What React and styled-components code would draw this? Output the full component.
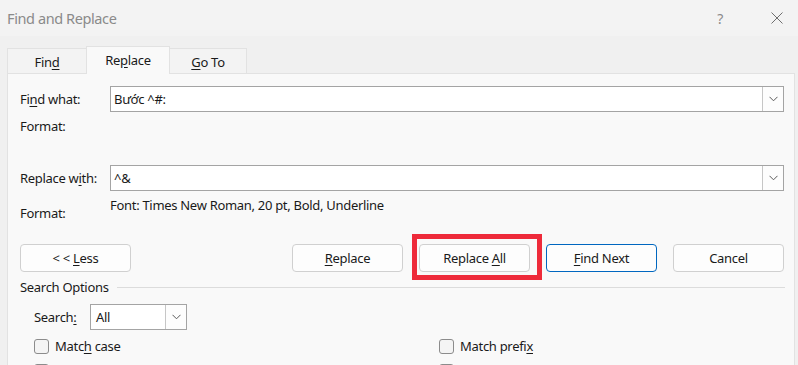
import React from 'react';
import styled, { createGlobalStyle, css } from 'styled-components';

const GlobalStyle = createGlobalStyle`
  html, body {
    margin: 0;
    padding: 0;
  }
  body {
    width: 798px;
    height: 365px;
    overflow: hidden;
    background: #f0f0f0;
    font-family: "Noto Sans", "Segoe UI", sans-serif;
    font-size: 13px;
    letter-spacing: -0.3px;
    color: #1a1a1a;
  }
  u {
    text-underline-offset: 2px;
  }
`;

const Window = styled.div`
  width: 798px;
  height: 365px;
  display: flex;
  flex-direction: column;
  overflow: hidden;
  background: #f0f0f0;
`;

const TitleBar = styled.div`
  height: 36px;
  flex: none;
  display: flex;
  align-items: center;
  padding: 0 15px 0 7px;
  background: #f3f3f3;
`;

const Title = styled.div`
  flex: 1;
  font-size: 14.5px;
  letter-spacing: -0.4px;
  color: #8a8a8a;
`;

const Controls = styled.div`
  display: flex;
  align-items: center;
  gap: 48px;
  color: #8a8a8a;
  font-size: 14px;
`;

const TabStrip = styled.div`
  height: 37px;
  flex: none;
  display: flex;
  align-items: flex-end;
  padding-left: 7px;
  position: relative;
  z-index: 1;
`;

const Tab = styled.div`
  height: 25px;
  box-sizing: border-box;
  width: ${(p) => p.$w}px;
  display: flex;
  align-items: center;
  justify-content: center;
  padding-top: 1px;
  background: #f3f3f3;
  border: 1px solid #e2e2e2;
  border-bottom: none;
  margin-left: -1px;
  &:first-child {
    margin-left: 0;
  }
  ${(p) =>
    p.$active &&
    css`
      height: 28px;
      margin-bottom: -1px;
      background: #f9f9f9;
      padding-top: 0;
      padding-bottom: 2px;
    `}
`;

const Panel = styled.div`
  flex: 1;
  margin: 0 3px 0 7px;
  background: #f9f9f9;
  border: 1px solid #e2e2e2;
  padding: 12px 10px 0 12px;
  display: flex;
  flex-direction: column;
`;

const FieldRow = styled.div`
  display: grid;
  grid-template-columns: 90px 1fr;
  align-items: ${(p) => (p.$top ? 'start' : 'center')};
  margin-top: ${(p) => p.$mt || 0}px;
  min-height: ${(p) => p.$h || 18}px;
`;

const Label = styled.div`
  line-height: 18px;
  padding-top: ${(p) => p.$pt || 0}px;
`;

const Value = styled.div`
  line-height: 18px;
`;

const Combo = styled.div`
  height: 26px;
  box-sizing: border-box;
  background: #fff;
  border: 1px solid #a4a4a4;
  display: flex;
  align-items: center;
  width: ${(p) => (p.$w ? `${p.$w}px` : 'auto')};
`;

const ComboText = styled.div`
  flex: 1;
  padding-left: ${(p) => p.$pl || 3}px;
  white-space: nowrap;
`;

const DropButton = styled.div`
  width: 21px;
  height: 100%;
  box-sizing: border-box;
  border-left: 1px solid #c6c6c6;
  background: #fdfdfd;
  display: flex;
  align-items: center;
  justify-content: center;
`;

const ButtonRow = styled.div`
  display: flex;
  align-items: center;
  gap: 16px;
  margin-top: 22px;
`;

const Spacer = styled.div`
  flex: 1;
`;

const Button = styled.div`
  width: 111px;
  height: 28px;
  box-sizing: border-box;
  display: flex;
  align-items: center;
  justify-content: center;
  background: #fdfdfd;
  border: 1px solid ${(p) => (p.$primary ? '#0067c0' : '#d0d0d0')};
  border-radius: 4px;
`;

const Highlight = styled.div`
  position: relative;
  &::after {
    content: '';
    position: absolute;
    top: -10px;
    left: -7px;
    right: -12px;
    bottom: -8px;
    border: 5px solid #ee2a3a;
    pointer-events: none;
  }
`;

const SectionHeader = styled.div`
  display: flex;
  align-items: center;
  gap: 8px;
  margin-top: 6px;
  line-height: 18px;
  margin-right: -1px;
  &::after {
    content: '';
    flex: 1;
    height: 1px;
    background: #dcdcdc;
  }
`;

const SearchRow = styled.div`
  display: flex;
  align-items: center;
  margin: 8px 0 0 14px;
`;

const SearchLabel = styled.div`
  width: 56px;
`;

const OptionGrid = styled.div`
  display: grid;
  grid-template-columns: 405px 1fr;
  row-gap: 7px;
  margin: 7px 0 0 14px;
`;

const Option = styled.label`
  display: flex;
  align-items: center;
  gap: 6px;
  height: 18px;
`;

const Box = styled.span`
  width: 15px;
  height: 15px;
  box-sizing: border-box;
  border: 1px solid #8c8c8c;
  border-radius: 3px;
  background: #f4f4f4;
`;

const Chevron = () => (
  <svg width="9" height="6" viewBox="0 0 9 6">
    <path d="M0.5 0.8 L4.5 4.8 L8.5 0.8" fill="none" stroke="#5a5a5a" strokeWidth="1" />
  </svg>
);

const CloseIcon = () => (
  <svg width="12" height="12" viewBox="0 0 12 12">
    <path d="M0.5 0.5 L11.5 11.5 M11.5 0.5 L0.5 11.5" stroke="#6e6e6e" strokeWidth="1" />
  </svg>
);

export default function App() {
  return (
    <Window>
      <GlobalStyle />
      <TitleBar>
        <Title>Find and Replace</Title>
        <Controls>
          <span>?</span>
          <CloseIcon />
        </Controls>
      </TitleBar>

      <TabStrip>
        <Tab $w={80}>
          Fin<u>d</u>
        </Tab>
        <Tab $w={84} $active>
          Re<u>p</u>lace
        </Tab>
        <Tab $w={78}>
          <u>G</u>o To
        </Tab>
      </TabStrip>

      <Panel>
        <FieldRow $h={26}>
          <Label>
            Fi<u>n</u>d what:
          </Label>
          <Combo>
            <ComboText>Bước ^#:</ComboText>
            <DropButton>
              <Chevron />
            </DropButton>
          </Combo>
        </FieldRow>
        <FieldRow $mt={5}>
          <Label>Format:</Label>
          <Value />
        </FieldRow>

        <FieldRow $h={26} $mt={30}>
          <Label>
            Replace w<u>i</u>th:
          </Label>
          <Combo>
            <ComboText>^&amp;</ComboText>
            <DropButton>
              <Chevron />
            </DropButton>
          </Combo>
        </FieldRow>
        <FieldRow $top $h={26} $mt={5}>
          <Label $pt={8}>Format:</Label>
          <Value>Font: Times New Roman, 20 pt, Bold, Underline</Value>
        </FieldRow>

        <ButtonRow>
          <Button>
            &lt;&nbsp;&lt;&nbsp;<u>L</u>ess
          </Button>
          <Spacer />
          <Button>
            <u>R</u>eplace
          </Button>
          <Highlight>
            <Button>
              Replace&nbsp;<u>A</u>ll
            </Button>
          </Highlight>
          <Button $primary>
            <u>F</u>ind Next
          </Button>
          <Button>Cancel</Button>
        </ButtonRow>

        <SectionHeader>Search Options</SectionHeader>

        <SearchRow>
          <SearchLabel>
            Search<u>:</u>
          </SearchLabel>
          <Combo $w={97}>
            <ComboText $pl={5}>All</ComboText>
            <DropButton>
              <Chevron />
            </DropButton>
          </Combo>
        </SearchRow>

        <OptionGrid>
          <Option>
            <Box />
            <span>
              Matc<u>h</u> case
            </span>
          </Option>
          <Option>
            <Box />
            <span>
              Match prefi<u>x</u>
            </span>
          </Option>
          <Option>
            <Box />
          </Option>
          <Option>
            <Box />
          </Option>
        </OptionGrid>
      </Panel>
    </Window>
  );
}
